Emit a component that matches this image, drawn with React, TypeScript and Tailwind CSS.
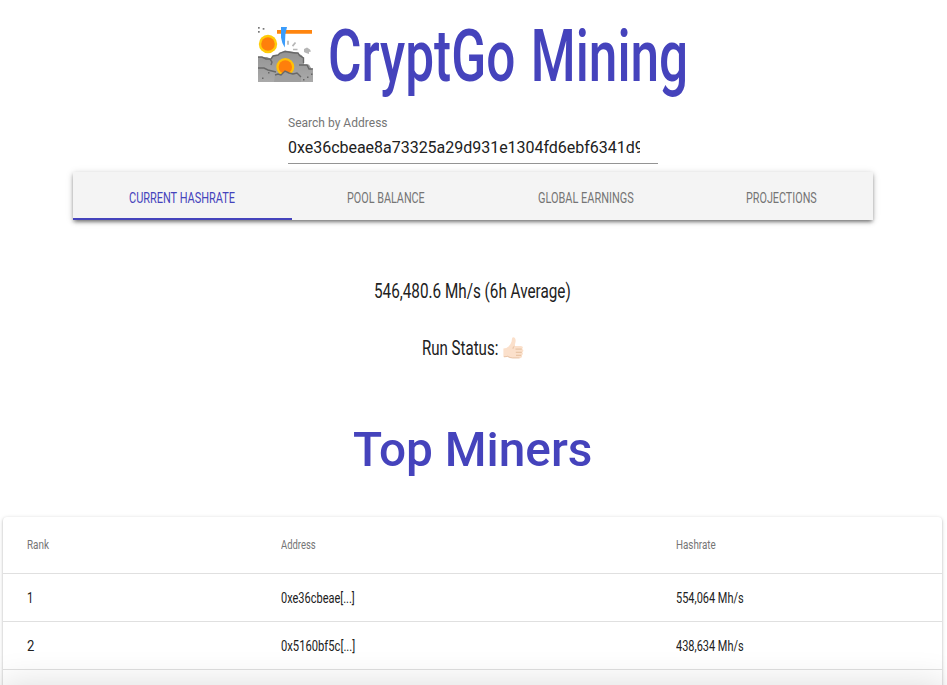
import { useLayoutEffect, useRef, useState } from "react";

type FitProps = { text: string; width: number; className?: string };

// Condenses a single line of text to an exact column width.
function Fit({ text, width, className = "" }: FitProps) {
  const ref = useRef<HTMLSpanElement>(null);
  const [scale, setScale] = useState(1);
  useLayoutEffect(() => {
    if (ref.current) setScale(width / ref.current.offsetWidth);
  }, [text, width]);
  return (
    <span className="block shrink-0" style={{ width }}>
      <span
        ref={ref}
        className={`block w-max origin-left whitespace-nowrap ${className}`}
        style={{ transform: `scaleX(${scale})` }}
      >
        {text}
      </span>
    </span>
  );
}

function MiningLogo() {
  return (
    <svg className="mt-[11px] h-[55px] w-[55px] shrink-0" viewBox="0 0 55 55">
      <defs>
        <linearGradient id="rock" x1="0" y1="0" x2="0" y2="1">
          <stop offset="0" stopColor="#929292" />
          <stop offset="1" stopColor="#aaaaaa" />
        </linearGradient>
      </defs>
      <g fill="#777">
        <rect x="0" y="0" width="1.7" height="1.7" />
        <rect x="4.7" y="1" width="1.7" height="1.7" />
        <rect x="0" y="4" width="1.7" height="1.7" />
      </g>
      <path d="M0 30h9l4 2 2-3 5-1 2-2 5-2.5 12 2 5 3 2 4v5h5l3 5h2v13H0Z" fill="url(#rock)" />
      <path
        d="M0 30h4l4 2h4l2 3-1 3M13 32l2-3 5-1 2-2 5-1.5 10 1.5h3l1.5 2.5 4 2.5v5M41 38h8l2 4h4"
        fill="none"
        stroke="#686868"
        strokeWidth="1.4"
      />
      <path d="M0 41h6l4 2 8 2" fill="none" stroke="#686868" strokeWidth="1.4" />
      <circle cx="27.3" cy="40" r="9" fill="#ffc107" />
      <circle cx="27.3" cy="40" r="6.7" fill="#ff7f0b" />
      <path d="M17 48l3-1 3 1 4-4 7 3 5-1 4 4v5H16Z" fill="#9e9e9e" />
      <path d="M17 48l3-1 3 1 4-4 4 2 4 1 4-1 4 4" fill="none" stroke="#686868" strokeWidth="1.4" />
      <g fill="#686868">
        <rect x="4" y="50.5" width="1.5" height="1.5" />
        <rect x="10" y="45" width="1.5" height="1.5" />
        <rect x="45" y="52" width="1.5" height="1.5" />
        <rect x="49" y="49.5" width="1.5" height="1.5" />
        <rect x="53" y="46.5" width="1.5" height="1.5" />
      </g>
      <circle cx="10" cy="17" r="9.2" fill="#ffcc0a" />
      <circle cx="10" cy="17" r="6.8" fill="#ff7f0b" />
      <path d="M19 3h35v3.8H19Z" fill="#ff850f" />
      <path d="M23 0H29l-1.6 7-.6 13.5q-3-4-3.8-10Z" fill="#3b9cfb" />
      <path d="M30 13.8v4M37.500 15.5l-3 3.6M35 22.5h4.5" stroke="#b7b7b7" strokeWidth="1.7" />
      <path d="M46 22l3-1.5 3 2 1 2-2 .5v2l-3-1-2-1Z" fill="#b5b5b5" />
    </svg>
  );
}

function ThumbsUp() {
  return (
    <svg className="ml-[5px] -mt-px h-[22px] w-[21px]" viewBox="0 0 21 22">
      <path
        d="M.4 11.5q3.2 0 5.2-2Q8 7 8.600 4.500 8.900 1 9.500.500q1.300-.6 2.400.6 1.200 1.600.5 4.400L11.600 9h6.300q2 .1 2 1.600 0 1-.9 1.400 1.500.4 1.400 1.800-.1 1.200-1.300 1.500 1 .5.800 1.700-.2 1.100-1.400 1.300.8.600.5 1.500-.4 1.300-2 1.500H9.500q-3 0-5-1.500-2.500.500-4.100.3Z"
        fill="#fbe0cb"
      />
      <path
        d="M11.500 9q-1.800 1.200-1.500 2.700M12.500 12.100h6.300M12.800 15.300h6M13 18.300h5.300"
        fill="none"
        stroke="#deb592"
        strokeWidth=".8"
      />
      <path d="M1 19.700q2.200.1 3.700-.4 2.300 1.600 4.800 1.600h7" fill="none" stroke="#e2bc9e" strokeWidth=".8" />
    </svg>
  );
}

const tabs = [
  { label: "CURRENT HASHRATE", text: 106, box: "w-[219px] pr-[2px] text-[#4543bc] border-[#4543bc]" },
  { label: "POOL BALANCE", text: 78, box: "w-[189px] pr-px text-[#757575] border-transparent" },
  { label: "GLOBAL EARNINGS", text: 96, box: "w-[210px] text-[#757575] border-transparent" },
  { label: "PROJECTIONS", text: 71, box: "w-[181px] text-[#757575] border-transparent" },
];

const rows = [
  { rank: "1", rankWidth: 6, address: "0xe36cbeae[...]", rate: "554,064 Mh/s" },
  { rank: "2", rankWidth: 7, address: "0x5160bf5c[...]", rate: "438,634 Mh/s" },
];

const columns = "grid grid-cols-[254px_395px_1fr] items-center border-b border-[#e0e0e0] pl-6";

export default function App() {
  return (
    <div className="relative h-[685px] w-[947px] overflow-hidden bg-white font-['Roboto',sans-serif] text-[#212121]">
      <header className="flex h-[115px] items-start pl-[258px] pt-4">
        <MiningLogo />
        <h1 className="ml-[15px] text-[#4543bc]">
          <Fit text="CryptGo Mining" width={360} className="text-[72px] leading-[82px] font-medium [word-spacing:4px]" />
        </h1>
      </header>

      <div className="ml-[288px] h-[57px] w-[370px]">
        <label className="block text-[12px] leading-4 tracking-[0.02px] text-[#757575]">Search by Address</label>
        <div className="mt-1 h-[29px] border-b border-[#949494]">
          <div className="w-[352px] overflow-hidden pt-px text-[16px] leading-6 tracking-[-0.02px] whitespace-nowrap">
            0xe36cbeae8a73325a29d931e1304fd6ebf6341d9
          </div>
        </div>
      </div>

      <nav className="ml-[73px] flex h-12 w-[800px] bg-[#f4f4f4] shadow-[0_3px_4px_-2px_rgba(0,0,0,0.4),0_2px_4px_rgba(0,0,0,0.26),0_1px_8px_rgba(0,0,0,0.12)]">
        {tabs.map((tab) => (
          <div key={tab.label} className={`flex items-center justify-center border-b-2 pt-[5px] ${tab.box}`}>
            <Fit text={tab.label} width={tab.text} className="text-[15.5px] leading-6 font-[450]" />
          </div>
        ))}
      </nav>

      <section className="flex flex-col items-center pt-[58px] pr-[2px]">
        <Fit text="546,480.6 Mh/s (6h Average)" width={197} className="text-[20px] leading-[27px] font-[450]" />
        <div className="mt-[30px] flex items-center">
          <Fit text="Run Status:" width={76} className="text-[20px] leading-[27px] font-[450]" />
          <ThumbsUp />
        </div>
      </section>

      <h2 className="mt-[60px] flex pl-[353px] text-[#4543bc]">
        <Fit text="Top Miners" width={239} className="text-[49px] leading-[56px] font-[550]" />
      </h2>

      <div className="mt-[39px] ml-[3px] h-[400px] w-[939px] rounded bg-white shadow-[0_2px_1px_-1px_rgba(0,0,0,0.2),0_1px_2px_rgba(0,0,0,0.2),0_1px_4px_rgba(0,0,0,0.16)]">
        <div className={`h-[57px] pb-[2px] text-[#757575] ${columns}`}>
          <Fit text="Rank" width={22} className="text-[13.5px] leading-5" />
          <Fit text="Address" width={35} className="text-[13.5px] leading-5" />
          <Fit text="Hashrate" width={40} className="text-[13.5px] leading-5" />
        </div>
        {rows.map((row) => (
          <div key={row.rank} className={`h-12 ${columns}`}>
            <Fit text={row.rank} width={row.rankWidth} className="text-[15px] leading-5 font-[450]" />
            <Fit text={row.address} width={74} className="text-[15px] leading-5 font-[450]" />
            <Fit text={row.rate} width={68} className="text-[15px] leading-5 font-[450]" />
          </div>
        ))}
      </div>

      <div className="absolute top-[685px] right-0 left-0 h-14 shadow-[0_0_36px_rgba(0,0,0,0.14)]" />
    </div>
  );
}
